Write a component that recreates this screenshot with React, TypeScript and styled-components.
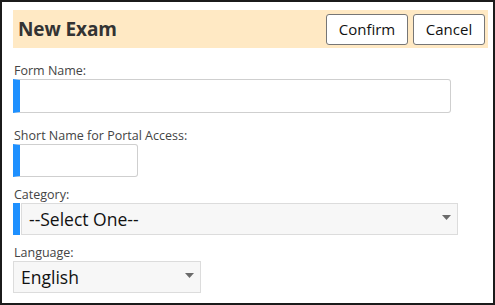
import React from "react";
import styled, { createGlobalStyle } from "styled-components";

const Global = createGlobalStyle`
  html, body { margin: 0; padding: 0; background: #fff; }
  * { box-sizing: border-box; }
  body { font-family: "Open Sans", "Noto Sans", sans-serif; color: #333; }
`;

const Dialog = styled.div`
  width: 495px;
  height: 305px;
  border: 2px solid #1b1b1b;
  padding: 8px 6px 0 11px;
  display: flex;
  flex-direction: column;
  background: #fff;
`;

const Header = styled.div`
  width: 475px;
  height: 38px;
  background: #ffe9c4;
  display: flex;
  align-items: center;
  justify-content: space-between;
  padding: 0 3px 0 5px;
`;

const Title = styled.h1`
  margin: 0;
  font-size: 19px;
  font-weight: 700;
  color: #333;
  letter-spacing: -0.1px;
`;

const Actions = styled.div`
  display: flex;
  gap: 5px;
`;

const Button = styled.button<{ $w: number }>`
  width: ${(p) => p.$w}px;
  height: 31px;
  background: #fff;
  border: 1px solid #767676;
  border-radius: 3px;
  font-family: "Open Sans", "Noto Sans", sans-serif;
  font-size: 15px;
  color: #111;
  padding: 0;
  cursor: pointer;
`;

const Field = styled.div<{ $gap: number }>`
  margin-top: ${(p) => p.$gap}px;
  display: flex;
  flex-direction: column;
  align-items: flex-start;
`;

const Label = styled.label`
  font-size: 12.5px;
  line-height: 17px;
  height: 17px;
  color: #444;
  padding-left: 1px;
`;

const TextInput = styled.input<{ $w: number; $h: number }>`
  width: ${(p) => p.$w}px;
  height: ${(p) => p.$h}px;
  border: 1px solid #cfcfcf;
  border-left: 7px solid #1e90ff;
  border-radius: 0 3px 3px 0;
  background: #fff;
  outline: none;
  padding: 0 6px;
  font-size: 16px;
`;

const RequiredRow = styled.div`
  display: flex;
  border-left: 7px solid #1e90ff;
  padding-left: 1px;
  background: #fff;
`;

const SelectBox = styled.div<{ $w: number }>`
  width: ${(p) => p.$w}px;
  height: 32px;
  background: #f7f7f7;
  border: 1px solid #dcdcdc;
  display: flex;
  align-items: center;
  justify-content: space-between;
  padding: 0 6px 0 7px;
  font-size: 17.5px;
  color: #111;
`;

const Arrow = styled.svg`
  width: 9px;
  height: 5px;
  margin-bottom: 4px;
  flex: none;
`;

function Caret() {
  return (
    <Arrow viewBox="0 0 9 5">
      <path d="M0 0 H9 L4.5 5 Z" fill="#6b6b6b" />
    </Arrow>
  );
}

export default function App() {
  return (
    <>
      <Global />
      <Dialog>
        <Header>
          <Title>New Exam</Title>
          <Actions>
            <Button $w={82}>Confirm</Button>
            <Button $w={72}>Cancel</Button>
          </Actions>
        </Header>
        <Field $gap={14}>
          <Label>Form Name:</Label>
          <TextInput $w={438} $h={34} />
        </Field>
        <Field $gap={14}>
          <Label>Short Name for Portal Access:</Label>
          <TextInput $w={125} $h={33} />
        </Field>
        <Field $gap={9}>
          <Label>Category:</Label>
          <RequiredRow>
            <SelectBox $w={437} role="combobox">
              <span>--Select One--</span>
              <Caret />
            </SelectBox>
          </RequiredRow>
        </Field>
        <Field $gap={9}>
          <Label>Language:</Label>
          <SelectBox $w={188} role="combobox">
            <span>English</span>
            <Caret />
          </SelectBox>
        </Field>
      </Dialog>
    </>
  );
}
